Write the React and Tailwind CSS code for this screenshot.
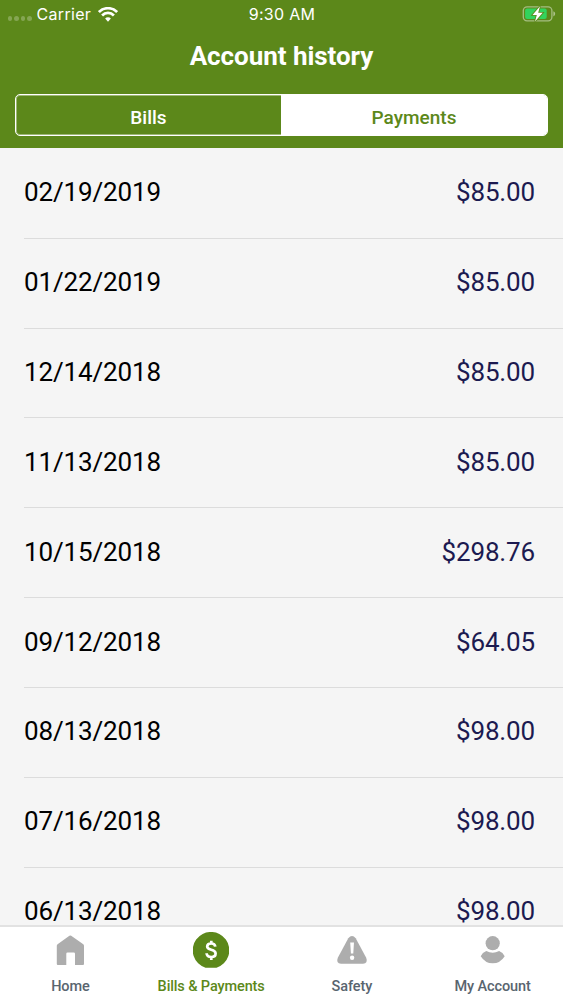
const payments = [
  ['02/19/2019', '$85.00'],
  ['01/22/2019', '$85.00'],
  ['12/14/2018', '$85.00'],
  ['11/13/2018', '$85.00'],
  ['10/15/2018', '$298.76'],
  ['09/12/2018', '$64.05'],
  ['08/13/2018', '$98.00'],
  ['07/16/2018', '$98.00'],
  ['06/13/2018', '$98.00'],
];

function WifiIcon() {
  return (
    <svg width="20" height="15" viewBox="0 0 20 15" className="ml-[7px]" fill="none" stroke="#fff" strokeWidth="2.7">
      <path d="M0.9 5.1C6 -0.1 14 -0.1 19.1 5.1" />
      <path d="M4.1 8.5C7.4 5.1 12.6 5.1 15.9 8.5" />
      <path d="M7.1 11.6C8.7 9.9 11.3 9.9 12.9 11.6L10 14.7Z" fill="#fff" stroke="none" />
    </svg>
  );
}

function BatteryIcon() {
  return (
    <svg width="34" height="16" viewBox="0 0 34 16">
      <rect x="1.3" y="0.8" width="28.6" height="14" rx="3.8" fill="none" stroke="#fff" strokeOpacity="0.45" strokeWidth="1.3" />
      <rect x="3.1" y="2.6" width="21.6" height="10.4" rx="2" fill="#32d35c" />
      <path d="M31.4 5.2Q33.2 6 33.2 7.8Q33.2 9.6 31.4 10.4Z" fill="#fff" fillOpacity="0.5" />
      <path d="M18 0.3L10.5 8.9H14.8L13 15.4L20.7 6.8H16.2Z" fill="#fff" stroke="#5c881a" strokeWidth="1.7" paintOrder="stroke" />
    </svg>
  );
}

function HomeIcon() {
  return (
    <svg width="36" height="36" viewBox="0 0 36 36" fill="#adadad">
      <path d="M17.400 3.700Q18.300 3.100 19.200 3.700L31.300 12.300Q32 12.900 32 13.800V32Q32 33 31 33H23V21.700Q23 20.500 21.800 20.500H15.500Q14.300 20.500 14.300 21.700V33H5.800Q4.800 33 4.800 32V13.800Q4.800 12.900 5.600 12.300Z" />
    </svg>
  );
}

function DollarIcon() {
  return (
    <svg width="36" height="36" viewBox="0 0 36 36">
      <path d="M12.500 35.700A18.300 18.300 0 1 1 23.500 35.700Z" fill="#5c881a" />
      <path d="M22.300 14.600C22 12.300 20.600 11.500 18.200 11.500C15.700 11.500 14.200 12.600 14.200 14.500C14.200 19 22.600 16.600 22.600 21.500C22.600 23.700 20.900 25 18.300 25C15.400 25 13.700 23.600 13.600 21.300M18.300 8.700V12M18.300 24.500V28" fill="none" stroke="#fff" strokeWidth="2.700" />
    </svg>
  );
}

function SafetyIcon() {
  return (
    <svg width="36" height="36" viewBox="0 0 36 36">
      <path d="M14.300 6.200Q18 1.900 21.700 6.200L32.200 25.800Q34.300 31.300 29 31.800H7Q1.700 31.300 3.800 25.800Z" fill="#adadad" />
      <path d="M16.200 10.500H20L19.300 21.500H16.900Z" fill="#fff" />
      <circle cx="18.100" cy="25.800" r="2.200" fill="#fff" />
    </svg>
  );
}

function AccountIcon() {
  return (
    <svg width="36" height="36" viewBox="0 0 36 36" fill="#adadad">
      <circle cx="17.700" cy="11.200" r="7.100" />
      <path d="M11.300 19Q17.700 22.400 24.100 19Q28.200 20.500 29.700 24.200Q25.200 31.300 17.700 31.300Q10.200 31.300 5.700 24.200Q7.200 20.500 11.300 19Z" />
    </svg>
  );
}

const tabs = [
  ['Home', HomeIcon],
  ['Bills & Payments', DollarIcon],
  ['Safety', SafetyIcon],
  ['My Account', AccountIcon],
];

export default function App() {
  return (
    <div className="flex h-[1000px] w-[563px] flex-col overflow-hidden bg-[#f5f5f5] font-['Roboto',sans-serif]">
      <header className="h-[148px] shrink-0 bg-[#5c881a] text-white">
        <div className="grid h-7 grid-cols-3 items-center pr-[7px] pl-2 font-['Inter',sans-serif] text-[16px] leading-7 tracking-[0.3px]">
          <div className="flex items-center">
            <div className="mt-[9px] mr-[5px] flex gap-[2px]">
              {[0, 1, 2, 3].map((n) => (
                <span key={n} className="size-[4.400px] rounded-full bg-white/25" />
              ))}
            </div>
            <span>Carrier</span>
            <WifiIcon />
          </div>
          <div className="text-center">9:30 AM</div>
          <div className="flex justify-end">
            <BatteryIcon />
          </div>
        </div>
        <h1 className="mt-3 text-center text-[26px] leading-8 font-bold tracking-[-0.05px]">Account history</h1>
        <div className="mx-[15px] mt-[22px] flex h-[42px] overflow-hidden rounded-[5px] border border-white text-[19px] font-medium inset-ring-1 inset-ring-white/40">
          <button className="w-[265px] pt-[6px]">Bills</button>
          <button className="flex-1 bg-white pt-[6px] text-[#5c881a]">Payments</button>
        </div>
      </header>
      <main className="min-h-0 flex-1 overflow-hidden pt-[0.900px] pl-6">
        {payments.map(([date, amount]) => (
          <div key={date} className="flex h-[89.860px] items-center justify-between border-b border-[#dcdcdc] pr-7 pb-[2px] text-[26px] leading-6 tracking-[-0.150px]">
            <span className="text-black">{date}</span>
            <span className="text-[#1c1a50]">{amount}</span>
          </div>
        ))}
      </main>
      <nav className="grid h-[75px] shrink-0 grid-cols-4 border-t-2 border-[#e2e2e2] bg-white">
        {tabs.map(([label, Icon], i) => (
          <div key={label} className="flex flex-col items-center pt-[5px]">
            <Icon />
            <span className={`mt-[9px] text-[14.500px] leading-5 font-medium tracking-[-0.120px] whitespace-nowrap ${i === 1 ? 'text-[#5c881a]' : 'text-[#59656f]'}`}>{label}</span>
          </div>
        ))}
      </nav>
    </div>
  );
}
